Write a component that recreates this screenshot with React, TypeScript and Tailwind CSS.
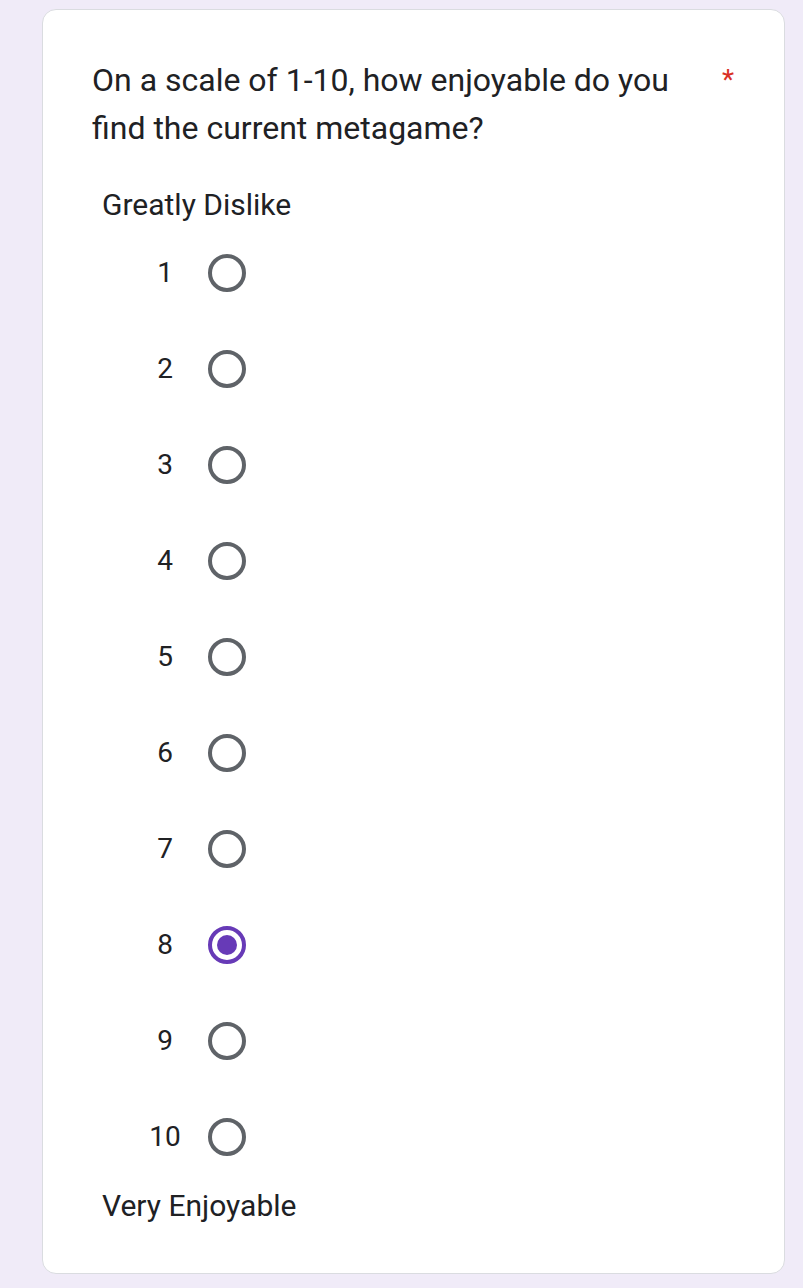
import React from "react";

const options = [1, 2, 3, 4, 5, 6, 7, 8, 9, 10];

function Radio({ checked }: { checked: boolean }) {
  return (
    <div
      className={`flex h-[38px] w-[38px] items-center justify-center rounded-full border-[4px] ${
        checked ? "border-[#673ab7]" : "border-[#5f6368]"
      }`}
    >
      {checked && <div className="h-[20px] w-[20px] rounded-full bg-[#673ab7]" />}
    </div>
  );
}

export default function App() {
  return (
    <div className="min-h-[1288px] bg-[#f0ebf8] px-[42px] pt-[9px] pb-[15px] font-['Roboto',sans-serif] text-[#202124]">
      <div className="w-[743px] rounded-[14px] border border-[#dadce0] bg-white pl-[49px] pr-[40px] pt-[46px] pb-[47px]">
        <div className="flex">
          <div className="w-[590px] text-[32px] leading-[48px]">
            On a scale of 1-10, how enjoyable do you find the current metagame?
          </div>
          <span className="ml-auto pr-[10px] text-[28px] leading-[48px] text-[#d93025]">*</span>
        </div>

        <div className="mt-[33px] pl-[10px] text-[30px] leading-[40px]">Greatly Dislike</div>

        <div className="flex flex-col pl-[43px]">
          {options.map((n) => (
            <div key={n} className="flex h-[96px] items-center">
              <div className="w-[60px] text-center text-[28px]">{n}</div>
              <div className="ml-[13px]">
                <Radio checked={n === 8} />
              </div>
            </div>
          ))}
        </div>

        <div className="mt-[1px] pl-[10px] text-[30px] leading-[40px]">Very Enjoyable</div>
      </div>
    </div>
  );
}
